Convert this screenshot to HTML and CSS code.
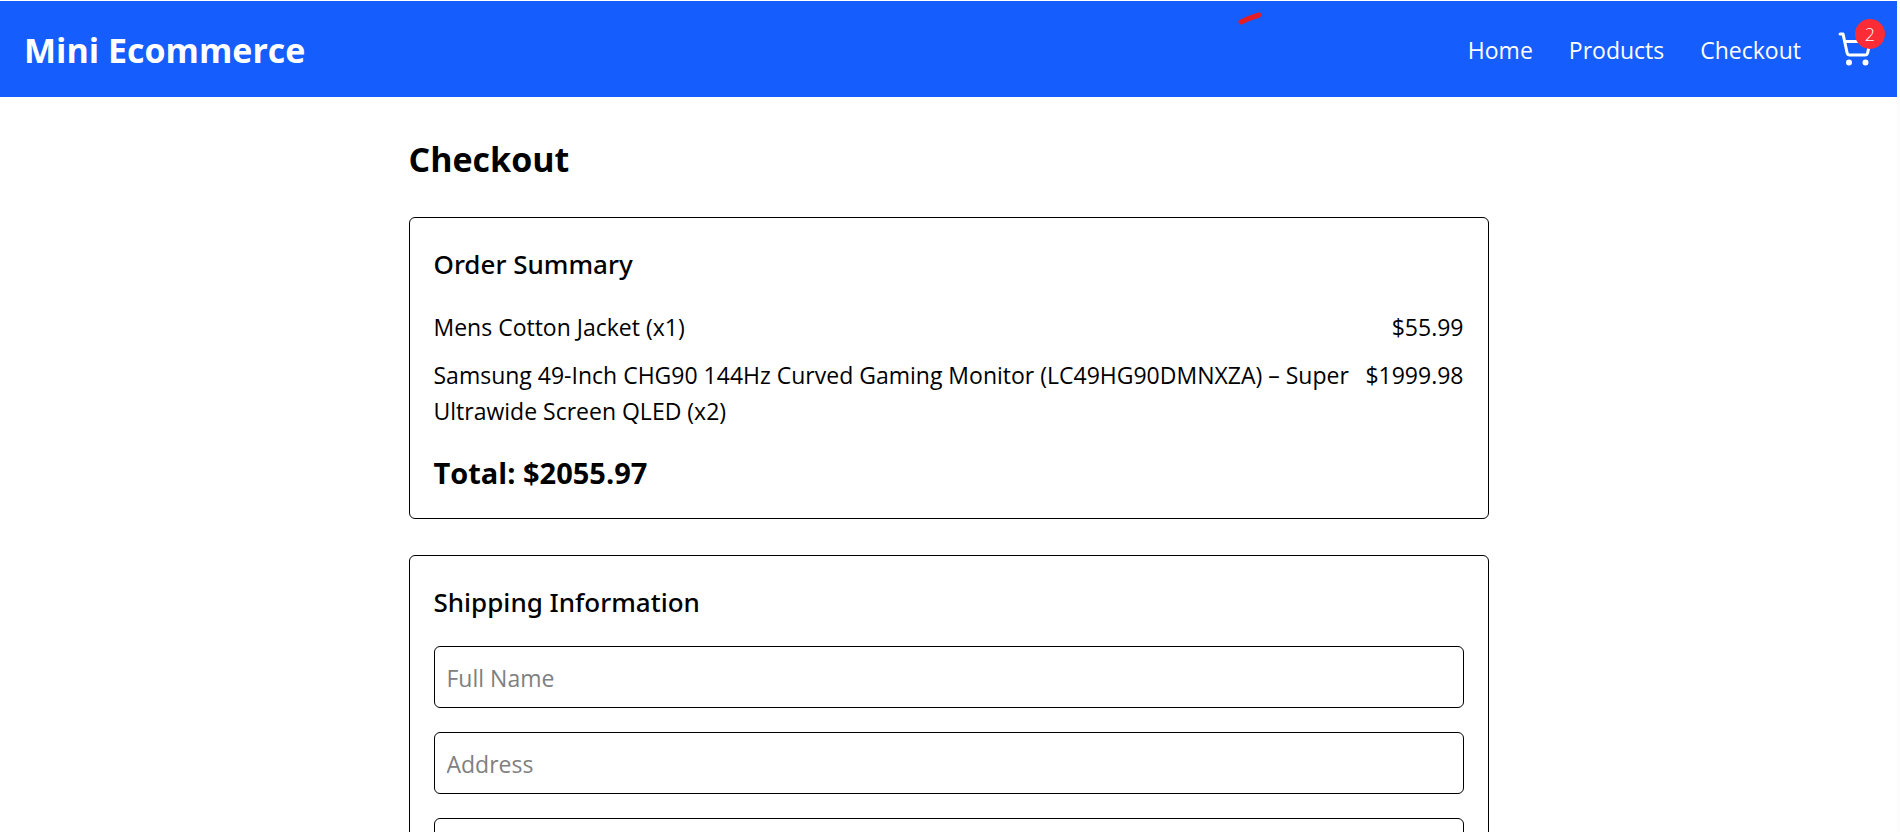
FILE: index.html
```html
<!DOCTYPE html>
<html lang="en">
<head>
<meta charset="utf-8">
<meta name="viewport" content="width=device-width, initial-scale=1">
<title>Mini Ecommerce</title>
<link rel="stylesheet" href="styles.css">
</head>
<body>
<header class="site-header">
  <a class="brand" href="#">Mini Ecommerce</a>
  <svg class="mark" viewBox="0 0 26 14" aria-hidden="true"><path d="M4 11Q12 7 22 4" /></svg>
  <nav class="nav">
    <a href="#">Home</a>
    <a href="#">Products</a>
    <a href="#">Checkout</a>
    <a class="cart" href="#" aria-label="Cart">
      <svg class="cart-icon" viewBox="0 0 24 24" aria-hidden="true">
        <circle cx="8" cy="21" r="1"/>
        <circle cx="19" cy="21" r="1"/>
        <path d="M2.05 2.05h2l2.66 12.42a2 2 0 0 0 2 1.58h9.78a2 2 0 0 0 1.95-1.57l1.65-7.43H5.12"/>
      </svg>
      <span class="badge">2</span>
    </a>
  </nav>
</header>
<main class="page">
  <h1 class="page-title">Checkout</h1>
  <section class="card">
    <h2 class="card-title">Order Summary</h2>
    <ul class="items">
      <li class="item"><span>Mens Cotton Jacket (x1)</span><span>$55.99</span></li>
      <li class="item"><span>Samsung 49-Inch CHG90 144Hz Curved Gaming Monitor (LC49HG90DMNXZA) – Super Ultrawide Screen QLED (x2)</span><span>$1999.98</span></li>
    </ul>
    <p class="total">Total: $2055.97</p>
  </section>
  <section class="card">
    <h2 class="card-title">Shipping Information</h2>
    <form class="form">
      <input class="field" type="text" placeholder="Full Name" aria-label="Full Name">
      <input class="field" type="text" placeholder="Address" aria-label="Address">
      <input class="field" type="text" aria-label="City">
    </form>
  </section>
</main>
</body>
</html>
```
FILE: styles.css
```css
*, *::before, *::after { box-sizing: border-box; }
html { overflow-x: hidden; scrollbar-width: none; }
body {
  margin: 0;
  padding-top: 1px;
  border-right: 3px solid #fcfcfc;
  background: #fff;
  color: #000;
  font: 23px/36px "Segoe UI", "Open Sans", "Noto Sans", sans-serif;
}
h1, h2, p, ul { margin: 0; padding: 0; }
a { color: inherit; text-decoration: none; }

.site-header {
  position: relative;
  display: flex;
  align-items: center;
  justify-content: space-between;
  height: 96px;
  padding: 0 24px;
  background: #155dfc;
  color: #fff;
}
.brand { padding-top: 2px; font-size: 34px; line-height: 48px; font-weight: 700; }
.mark {
  position: absolute;
  top: 10px;
  left: 65.2%;
  width: 26px;
  height: 14px;
  fill: none;
  stroke: #e51c23;
  stroke-width: 5;
  stroke-linecap: round;
}
.nav { display: flex; align-items: center; gap: 36px; }
.nav > a:not(.cart) { padding-top: 2px; }
.cart { position: relative; display: block; }
.cart-icon {
  display: block;
  width: 36px;
  height: 36px;
  fill: none;
  stroke: currentColor;
  stroke-width: 2;
  stroke-linecap: round;
  stroke-linejoin: round;
}
.badge {
  position: absolute;
  top: -12px;
  right: -12px;
  width: 30px;
  height: 30px;
  border-radius: 50%;
  background: #fb2c36;
  font-size: 18px;
  font-weight: 300;
  line-height: 30px;
  text-align: center;
}

.page { max-width: 1152px; margin: 0 auto; padding: 36px; }
.page-title { margin-bottom: 32px; font-size: 34px; line-height: 52px; font-weight: 700; }
.card {
  margin-bottom: 36px;
  padding: 24px;
  border: 1px solid #000;
  border-radius: 6px;
}
.card-title {
  margin-bottom: 22px;
  font-family: "Segoe UI", "Noto Sans", "Open Sans", sans-serif;
  font-size: 26px;
  line-height: 44px;
  font-weight: 500;
}
.items { padding-top: 1px; list-style: none; }
.item { display: flex; justify-content: space-between; gap: 8px; margin-bottom: 12px; }
.total { margin-top: 23px; font-size: 29px; line-height: 42px; font-weight: 700; }
.form { display: grid; gap: 24px; }
.field {
  width: 100%;
  height: 62px;
  padding: 13px 12px 11px;
  border: 1px solid #000;
  border-radius: 6px;
  background: #fff;
  color: inherit;
  font: inherit;
}
.field::placeholder { color: #808080; opacity: 1; }
```
